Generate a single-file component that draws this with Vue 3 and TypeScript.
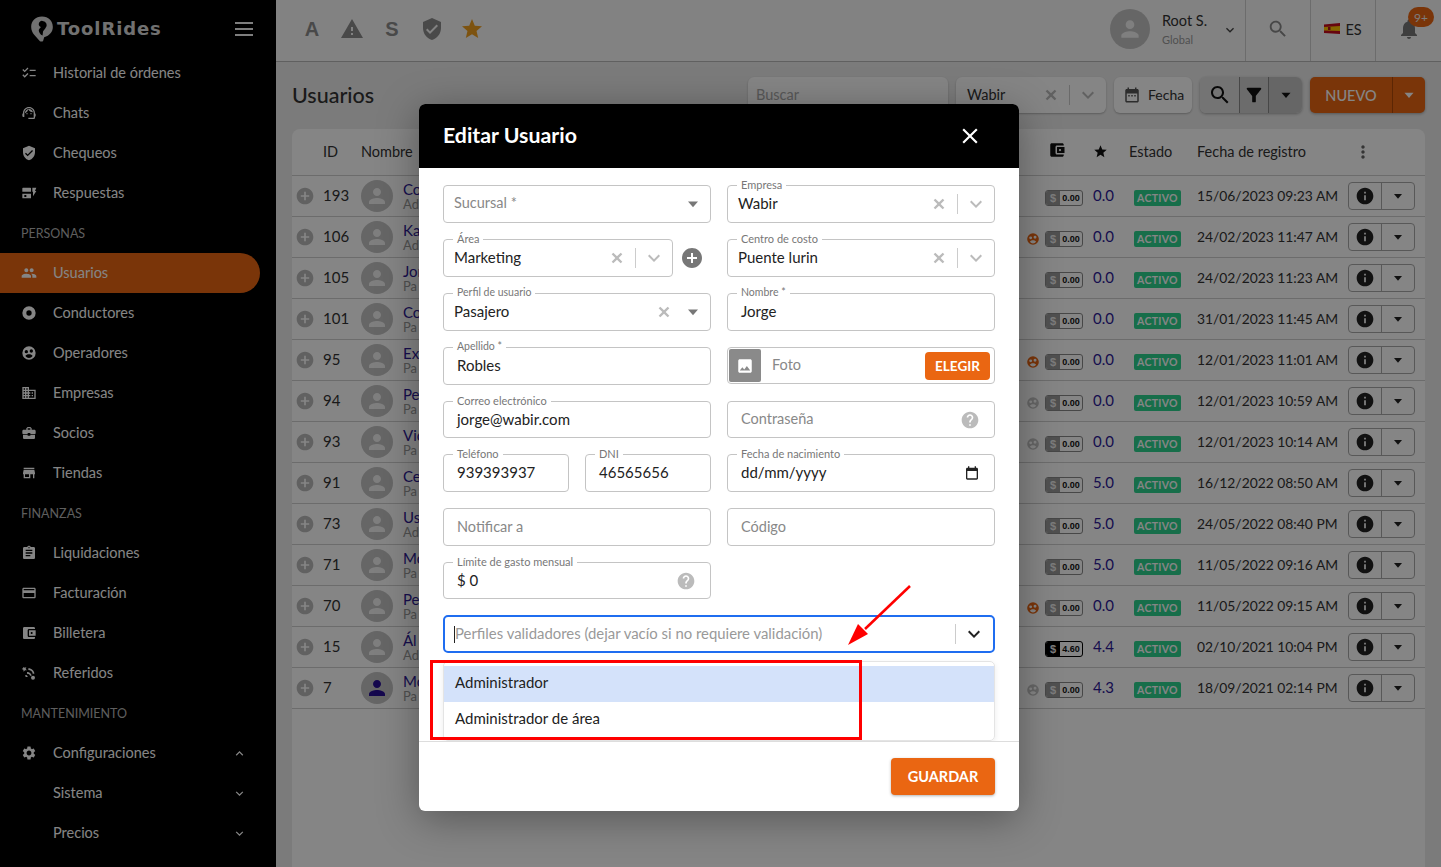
<script setup lang="ts">
import { h } from "vue";
import type { FunctionalComponent } from "vue";

/* material style icon paths */
const paths: Record<string, string> = {
    checklist: "M22 7h-9v2h9V7zm0 8h-9v2h9v-2zM5.54 11 2 7.46l1.41-1.41 2.12 2.12 4.24-4.24 1.41 1.41L5.54 11zm0 8L2 15.46l1.41-1.41 2.12 2.12 4.24-4.24 1.41 1.41L5.54 19z",
    agent: "M21 12.22C21 6.73 16.74 3 12 3c-4.69 0-9 3.65-9 9.28-.6.34-1 .98-1 1.72v2c0 1.1.9 2 2 2h1v-6.1c0-3.87 3.13-7 7-7s7 3.13 7 7V19h-8v2h8c1.1 0 2-.9 2-2v-1.22c.59-.31 1-.92 1-1.64v-2.3c0-.7-.41-1.31-1-1.62zM9 12a1 1 0 1 0 0 2 1 1 0 0 0 0-2zm6 0a1 1 0 1 0 0 2 1 1 0 0 0 0-2zM18 11.03C17.52 8.18 15.04 6 12.05 6c-3.03 0-6.29 2.51-6.03 6.45 2.47-1.01 4.33-3.21 4.86-5.89 1.31 2.63 4 4.44 7.12 4.47z",
    shield: "M12 1L3 5v6c0 5.55 3.84 10.74 9 12 5.16-1.26 9-6.45 9-12V5l-9-4zm-2 16l-4-4 1.41-1.41L10 14.17l6.59-6.59L18 9l-8 8z",
    form: "M3 4h11a1 1 0 0 1 1 1v5H2V5a1 1 0 0 1 1-1zm-1 9h13v7H3a1 1 0 0 1-1-1v-6zm3 2v3h3v-3H5zm12-11h6l-2 5h2l-5 8V10h-1V4z",
    people: "M16 11c1.66 0 2.99-1.34 2.99-3S17.66 5 16 5c-1.66 0-3 1.34-3 3s1.34 3 3 3zm-8 0c1.66 0 2.99-1.34 2.99-3S9.66 5 8 5C6.34 5 5 6.34 5 8s1.34 3 3 3zm0 2c-2.33 0-7 1.17-7 3.5V19h14v-2.5c0-2.33-4.67-3.5-7-3.5zm8 0c-.29 0-.62.02-.97.05 1.16.84 1.97 1.97 1.97 3.45V19h6v-2.5c0-2.33-4.67-3.5-7-3.5z",
    disc: "M12 2a10 10 0 1 0 0 20 10 10 0 0 0 0-20zm0 6a4 4 0 1 1 0 8 4 4 0 0 1 0-8z",
    face: "M12 2a10 10 0 1 0 0 20 10 10 0 0 0 0-20zM8 7.5a2.5 2.5 0 1 1 0 5 2.5 2.5 0 0 1 0-5zm7.5-1a2.5 2.5 0 1 1 0 5 2.5 2.5 0 0 1 0-5zM12 14c2.6 0 4.6 1 5.4 2.6A7 7 0 0 1 12 19.5a7 7 0 0 1-5.4-2.9C7.4 15 9.4 14 12 14z",
    domain: "M12 7V3H2v18h20V7H12zM6 19H4v-2h2v2zm0-4H4v-2h2v2zm0-4H4V9h2v2zm0-4H4V5h2v2zm4 12H8v-2h2v2zm0-4H8v-2h2v2zm0-4H8V9h2v2zm0-4H8V5h2v2zm10 12h-8v-2h2v-2h-2v-2h2v-2h-2V9h8v10zm-2-8h-2v2h2v-2zm0 4h-2v2h2v-2z",
    work: "M10 16v-1H3.01L3 19c0 1.11.89 2 2 2h14c1.11 0 2-.89 2-2v-4h-7v1h-4zm10-9h-4.01V5l-2-2h-4l-2 2v2H4c-1.1 0-2 .9-2 2v3c0 1.11.89 2 2 2h6v-2h4v2h6c1.1 0 2-.9 2-2V9c0-1.1-.9-2-2-2zm-6 0h-4V5h4v2z",
    store: "M20 4H4v2h16V4zm1 10v-2l-1-5H4l-1 5v2h1v6h10v-6h4v6h2v-6h1zm-9 4H6v-4h6v4z",
    assignment: "M19 3h-4.18C14.4 1.84 13.3 1 12 1c-1.3 0-2.4.84-2.82 2H5c-1.1 0-2 .9-2 2v14c0 1.1.9 2 2 2h14c1.1 0 2-.9 2-2V5c0-1.1-.9-2-2-2zm-7 0c.55 0 1 .45 1 1s-.45 1-1 1-1-.45-1-1 .45-1 1-1zm2 14H7v-2h7v2zm3-4H7v-2h10v2zm0-4H7V7h10v2z",
    card: "M20 4H4c-1.11 0-1.99.89-1.99 2L2 18c0 1.11.89 2 2 2h16c1.11 0 2-.89 2-2V6c0-1.11-.89-2-2-2zm0 14H4v-6h16v6zm0-10H4V6h16v2z",
    wallet: "M21 18v1c0 1.1-.9 2-2 2H5c-1.11 0-2-.9-2-2V5c0-1.1.89-2 2-2h14c1.1 0 2 .9 2 2v1h-9c-1.11 0-2 .9-2 2v8c0 1.1.89 2 2 2h9zm-9-2h10V8H12v8zm4-2.5c-.83 0-1.5-.67-1.5-1.5s.67-1.5 1.5-1.5 1.5.67 1.5 1.5-.67 1.5-1.5 1.5z",
    referral: "M3 3l3 1 2-1-1 3 2 2-3 0-2 2-.5-3-2.500-1 2.500-1.500zM11 5c5 0 9 4 9 8h-2.500c0-3-3-5.500-6.500-5.500zM9 10.500c4 0 7 3 7 5.500h-2.500c0-2-2-3-4.500-3zM6.500 15c2 0 3.500 1 3.500 3h-2.500c0-.5-.5-.8-1-.8zM18 16a3 3 0 1 1 0 6 3 3 0 0 1 0-6z",
    settings: "M19.14 12.94c.04-.3.06-.61.06-.94 0-.32-.02-.64-.07-.94l2.03-1.58a.49.49 0 0 0 .12-.61l-1.92-3.32a.488.488 0 0 0-.59-.22l-2.39.96c-.5-.38-1.03-.7-1.62-.94l-.36-2.54a.484.484 0 0 0-.48-.41h-3.84c-.24 0-.43.17-.47.41l-.36 2.54c-.59.24-1.13.57-1.62.94l-2.39-.96c-.22-.08-.47 0-.59.22L2.74 8.87c-.12.21-.08.47.12.61l2.03 1.58c-.05.3-.09.63-.09.94s.02.64.07.94l-2.03 1.58a.49.49 0 0 0-.12.61l1.92 3.32c.12.22.37.29.59.22l2.39-.96c.5.38 1.03.7 1.62.94l.36 2.54c.05.24.24.41.48.41h3.84c.24 0 .44-.17.47-.41l.36-2.54c.59-.24 1.13-.56 1.62-.94l2.39.96c.22.08.47 0 .59-.22l1.92-3.32c.12-.22.07-.47-.12-.61l-2.01-1.58zM12 15.6c-1.98 0-3.6-1.62-3.6-3.6s1.62-3.6 3.6-3.6 3.6 1.62 3.6 3.6-1.62 3.6-3.6 3.6z",
    person: "M12 12c2.21 0 4-1.79 4-4s-1.79-4-4-4-4 1.79-4 4 1.79 4 4 4zm0 2c-2.67 0-8 1.34-8 4v2h16v-2c0-2.66-5.33-4-8-4z",
    star: "M12 17.27 18.18 21l-1.64-7.03L22 9.24l-7.19-.61L12 2 9.19 8.63 2 9.24l5.46 4.73L5.82 21z",
    warning: "M1 21h22L12 2 1 21zm12-3h-2v-2h2v2zm0-4h-2v-4h2v4z",
    search: "M15.5 14h-.79l-.28-.27C15.41 12.59 16 11.11 16 9.5 16 5.91 13.09 3 9.5 3S3 5.91 3 9.5 5.91 16 9.5 16c1.61 0 3.09-.59 4.23-1.57l.27.28v.79l5 4.99L20.49 19l-4.99-5zm-6 0C7.01 14 5 11.99 5 9.5S7.01 5 9.5 5 14 7.01 14 9.5 11.99 14 9.5 14z",
    filter: "M4.25 5.61C6.27 8.2 10 13 10 13v6c0 .55.45 1 1 1h2c.55 0 1-.45 1-1v-6s3.72-4.8 5.74-7.39c.51-.66.04-1.61-.79-1.61H5.04c-.83 0-1.3.95-.79 1.61z",
    bell: "M12 22c1.1 0 2-.9 2-2h-4c0 1.1.9 2 2 2zm6-6v-5c0-3.07-1.63-5.64-4.5-6.32V4c0-.83-.67-1.5-1.5-1.5s-1.5.67-1.5 1.5v.68C7.64 5.36 6 7.92 6 11v5l-2 2v1h16v-1l-2-2z",
    calendar: "M19 4h-1V2h-2v2H8V2H6v2H5c-1.1 0-2 .9-2 2v14c0 1.1.9 2 2 2h14c1.1 0 2-.9 2-2V6c0-1.1-.9-2-2-2zm0 16H5V10h14v10zM9 14H7v-2h2v2zm4 0h-2v-2h2v2zm4 0h-2v-2h2v2z",
    datepick: "M19 4h-1V2h-2v2H8V2H6v2H5c-1.1 0-2 .9-2 2v14c0 1.1.9 2 2 2h14c1.1 0 2-.9 2-2V6c0-1.1-.9-2-2-2zm0 16H5V9h14v11z",
    info: "M12 2C6.48 2 2 6.48 2 12s4.48 10 10 10 10-4.48 10-10S17.52 2 12 2zm1 15h-2v-6h2v6zm0-8h-2V7h2v2z",
    help: "M12 2C6.48 2 2 6.48 2 12s4.48 10 10 10 10-4.48 10-10S17.52 2 12 2zm1 17h-2v-2h2v2zm2.07-7.75l-.9.92C13.45 12.9 13 13.5 13 15h-2v-.5c0-1.1.45-2.1 1.17-2.83l1.24-1.26c.37-.36.59-.86.59-1.41 0-1.1-.9-2-2-2s-2 .9-2 2H8c0-2.21 1.79-4 4-4s4 1.79 4 4c0 .88-.36 1.68-.93 2.25z",
    add: "M12 2C6.48 2 2 6.48 2 12s4.48 10 10 10 10-4.48 10-10S17.52 2 12 2zm5 11h-4v4h-2v-4H7v-2h4V7h2v4h4v2z",
    image: "M21 19V5c0-1.1-.9-2-2-2H5c-1.1 0-2 .9-2 2v14c0 1.1.9 2 2 2h14c1.1 0 2-.9 2-2zM8.5 13.5l2.5 3.01L14.5 12l4.5 6H5l3.5-4.5z",
    more: "M12 8c1.1 0 2-.9 2-2s-.9-2-2-2-2 .9-2 2 .9 2 2 2zm0 2c-1.1 0-2 .9-2 2s.9 2 2 2 2-.9 2-2-.9-2-2-2zm0 6c-1.1 0-2 .9-2 2s.9 2 2 2 2-.9 2-2-.9-2-2-2z",
    close: "M19 6.41 17.59 5 12 10.59 6.41 5 5 6.41 10.59 12 5 17.59 6.41 19 12 13.41 17.59 19 19 17.59 13.41 12z",
    xBold: "M20 6.500 17.500 4 12 9.500 6.500 4 4 6.500 9.500 12 4 17.500 6.500 20 12 14.500 17.500 20 20 17.500 14.500 12z",
    caret: "M6 9h12l-6 7z",
    chevron: "M7.4 8.6 12 13.2l4.6-4.6L18 10l-6 6-6-6z",
    chevronUp: "M7.4 15.4 12 10.8l4.6 4.6L18 14l-6-6-6 6z",
    pin: "M12 1C6 1 2 5.4 2 10.5c0 6 5 9 7.5 12.5.8 1 1.5 1 2.500 1 .6 0 1-.3 1.300-1.500L14 20c5-1.500 8-5 8-9.500C22 5.400 18 1 12 1zm.5 4a4 4 0 0 1 2.500 7l-2 2.500-.5 4c-2-1-3.500-3-3.500-5 0-1 1.500-2 2-3-1.500-.5-2-1.500-2-2.500a3 3 0 0 1 3.500-3z",
};

const Ic: FunctionalComponent<{ name: string }> = (props) =>
    h("svg", { viewBox: "0 0 24 24", fill: "currentColor", "fill-rule": "evenodd" }, [h("path", { d: paths[props.name] })]);
Ic.props = ["name"];

type NavItem = { label?: string; icon?: string; section?: string; active?: boolean; arrow?: "up" | "down" };

const navItems: NavItem[] = [
    { label: "Historial de órdenes", icon: "checklist" },
    { label: "Chats", icon: "agent" },
    { label: "Chequeos", icon: "shield" },
    { label: "Respuestas", icon: "form" },
    { section: "PERSONAS" },
    { label: "Usuarios", icon: "people", active: true },
    { label: "Conductores", icon: "disc" },
    { label: "Operadores", icon: "face" },
    { label: "Empresas", icon: "domain" },
    { label: "Socios", icon: "work" },
    { label: "Tiendas", icon: "store" },
    { section: "FINANZAS" },
    { label: "Liquidaciones", icon: "assignment" },
    { label: "Facturación", icon: "card" },
    { label: "Billetera", icon: "wallet" },
    { label: "Referidos", icon: "referral" },
    { section: "MANTENIMIENTO" },
    { label: "Configuraciones", icon: "settings", arrow: "up" },
    { label: "Sistema", arrow: "down" },
    { label: "Precios", arrow: "down" },
];

type Row = { id: number; name: string; role: string; face?: "on" | "off"; bal: string; rate: string; date: string };

const rows: Row[] = [
    { id: 193, name: "Co", role: "Ad", bal: "0.00", rate: "0.0", date: "15/06/2023 09:23 AM" },
    { id: 106, name: "Ka", role: "Ad", face: "on", bal: "0.00", rate: "0.0", date: "24/02/2023 11:47 AM" },
    { id: 105, name: "Jor", role: "Pa", bal: "0.00", rate: "0.0", date: "24/02/2023 11:23 AM" },
    { id: 101, name: "Co", role: "Pa", bal: "0.00", rate: "0.0", date: "31/01/2023 11:45 AM" },
    { id: 95, name: "Ex", role: "Pa", face: "on", bal: "0.00", rate: "0.0", date: "12/01/2023 11:01 AM" },
    { id: 94, name: "Pe", role: "Pa", face: "off", bal: "0.00", rate: "0.0", date: "12/01/2023 10:59 AM" },
    { id: 93, name: "Vic", role: "Pa", face: "off", bal: "0.00", rate: "0.0", date: "12/01/2023 10:14 AM" },
    { id: 91, name: "Ce", role: "Pa", bal: "0.00", rate: "5.0", date: "16/12/2022 08:50 AM" },
    { id: 73, name: "Us", role: "Ad", bal: "0.00", rate: "5.0", date: "24/05/2022 08:40 PM" },
    { id: 71, name: "Mo", role: "Pa", bal: "0.00", rate: "5.0", date: "11/05/2022 09:16 AM" },
    { id: 70, name: "Pe", role: "Pa", face: "on", bal: "0.00", rate: "0.0", date: "11/05/2022 09:15 AM" },
    { id: 15, name: "Ál", role: "Ad", bal: "4.60", rate: "4.4", date: "02/10/2021 10:04 PM" },
    { id: 7, name: "Mo", role: "Pa", face: "off", bal: "0.00", rate: "4.3", date: "18/09/2021 02:14 PM" },
];
</script>

<template>
    <div class="app">
        <!-- SIDEBAR -->
        <aside class="sidebar">
            <div class="logo-row">
                <div class="logo">
                    <Ic name="pin" class="logo-pin" />
                    <span class="logo-text">ToolRides</span>
                </div>
                <div class="burger"><i></i><i></i><i></i></div>
            </div>
            <nav>
                <template v-for="item in navItems" :key="item.label || item.section">
                    <div v-if="item.section" class="nav-section">{{ item.section }}</div>
                    <div v-else class="nav-item" :class="{ active: item.active }">
                        <span class="nav-icon"><Ic v-if="item.icon" :name="item.icon" /></span>
                        <span class="nav-label">{{ item.label }}</span>
                        <Ic v-if="item.arrow" :name="item.arrow === 'up' ? 'chevronUp' : 'chevron'" class="nav-arrow" />
                    </div>
                </template>
            </nav>
        </aside>

        <main class="main">
            <!-- TOP BAR -->
            <header class="topbar">
                <div class="quick">
                    <span class="quick-item letter">A</span>
                    <span class="quick-item"><Ic name="warning" /></span>
                    <span class="quick-item letter">S</span>
                    <span class="quick-item"><Ic name="shield" /></span>
                    <span class="quick-item gold"><Ic name="star" /></span>
                </div>
                <div class="user">
                    <span class="user-avatar"><Ic name="person" /></span>
                    <div class="user-text">
                        <div class="user-name">Root S.</div>
                        <div class="user-scope">Global</div>
                    </div>
                    <Ic name="chevron" class="user-chevron" />
                </div>
                <div class="top-cell search-cell"><Ic name="search" /></div>
                <div class="top-cell lang-cell">
                    <svg class="flag" viewBox="0 0 16 11">
                        <path d="M0 1.500 16 0v11L0 10z" fill="#c60b1e" />
                        <path d="M0 4 16 3v5L0 7.500z" fill="#ffc400" />
                        <rect x="4" y="4" width="2.500" height="3" fill="#ad1519" />
                    </svg>
                    <span>ES</span>
                </div>
                <div class="top-cell bell-cell">
                    <Ic name="bell" />
                    <span class="bell-badge">9+</span>
                </div>
            </header>

            <!-- TITLE AND ACTIONS -->
            <section class="toolbar">
                <h1>Usuarios</h1>
                <div class="tool-search"><span>Buscar</span></div>
                <div class="tool-select">
                    <span class="tool-select-value">Wabir</span>
                    <Ic name="xBold" class="sel-x" />
                    <i class="sel-sep"></i>
                    <Ic name="chevron" class="sel-chev" />
                </div>
                <div class="tool-date"><Ic name="calendar" /><span>Fecha</span></div>
                <div class="tool-group">
                    <span class="seg seg-search"><Ic name="search" /></span>
                    <span class="seg seg-filter"><Ic name="filter" /></span>
                    <span class="seg seg-caret"><Ic name="caret" /></span>
                </div>
                <div class="tool-new">
                    <span class="new-label">NUEVO</span>
                    <span class="new-caret"><Ic name="caret" /></span>
                </div>
            </section>

            <!-- TABLE -->
            <section class="table-card">
                <div class="grid-row head">
                    <span></span>
                    <span class="head-id">ID</span>
                    <span class="head-name">Nombre</span>
                    <span class="head-wallet"><Ic name="wallet" /></span>
                    <span class="head-star"><Ic name="star" /></span>
                    <span class="head-state">Estado</span>
                    <span class="head-date">Fecha de registro</span>
                    <span class="head-more"><Ic name="more" /></span>
                </div>
                <div v-for="row in rows" :key="row.id" class="grid-row body-row">
                    <span class="plus"><Ic name="add" /></span>
                    <span class="cell-id">{{ row.id }}</span>
                    <span class="avatar" :class="{ navy: row.id === 7 }"><Ic name="person" /></span>
                    <div class="cell-name">
                        <div class="name-main">{{ row.name }}</div>
                        <div class="name-sub">{{ row.role }}</div>
                    </div>
                    <span class="face" :class="row.face">
                        <Ic v-if="row.face" name="face" />
                    </span>
                    <span class="balance" :class="{ funded: row.bal !== '0.00' }">
                        <b>$</b><em>{{ row.bal }}</em>
                    </span>
                    <span class="rate">{{ row.rate }}</span>
                    <span class="state"><b>ACTIVO</b></span>
                    <span class="cell-date">{{ row.date }}</span>
                    <span class="row-actions">
                        <span class="act-info"><Ic name="info" /></span>
                        <span class="act-caret"><Ic name="caret" /></span>
                    </span>
                </div>
            </section>
        </main>

        <!-- BACKDROP -->
        <div class="backdrop"></div>

        <!-- MODAL -->
        <div class="modal">
            <div class="modal-head">
                <h2>Editar Usuario</h2>
                <Ic name="close" class="modal-close" />
            </div>
            <div class="modal-body">
                <div class="form-grid">
                    <div class="field select"><span class="ph high">Sucursal *</span><Ic name="caret" class="f-caret" /></div>
                    <div class="field select">
                        <label>Empresa</label><span class="val">Wabir</span>
                        <Ic name="xBold" class="f-x" /><i class="f-sep"></i><Ic name="chevron" class="f-chev" />
                    </div>

                    <div class="with-add">
                        <div class="field select">
                            <label>Área</label><span class="val">Marketing</span>
                            <Ic name="xBold" class="f-x" /><i class="f-sep"></i><Ic name="chevron" class="f-chev" />
                        </div>
                        <Ic name="add" class="add-btn" />
                    </div>
                    <div class="field select">
                        <label>Centro de costo</label><span class="val">Puente lurin</span>
                        <Ic name="xBold" class="f-x" /><i class="f-sep"></i><Ic name="chevron" class="f-chev" />
                    </div>

                    <div class="field select">
                        <label class="small">Perfil de usuario</label><span class="val">Pasajero</span>
                        <Ic name="xBold" class="f-x near" /><Ic name="caret" class="f-caret" />
                    </div>
                    <div class="field"><label class="small">Nombre *</label><span class="val">Jorge</span></div>

                    <div class="field"><label class="small">Apellido *</label><span class="val">Robles</span></div>
                    <div class="field photo">
                        <span class="photo-thumb"><Ic name="image" /></span>
                        <span class="ph">Foto</span>
                        <span class="photo-btn">ELEGIR</span>
                    </div>

                    <div class="field"><label>Correo electrónico</label><span class="val">jorge@wabir.com</span></div>
                    <div class="field"><span class="ph">Contraseña</span><Ic name="help" class="f-help" /></div>

                    <div class="pair">
                        <div class="field"><label>Teléfono</label><span class="val">939393937</span></div>
                        <div class="field"><label>DNI</label><span class="val">46565656</span></div>
                    </div>
                    <div class="field">
                        <label>Fecha de nacimiento</label><span class="val">dd/mm/yyyy</span>
                        <Ic name="datepick" class="f-date" />
                    </div>

                    <div class="field"><span class="ph">Notificar a</span></div>
                    <div class="field"><span class="ph">Código</span></div>

                    <div class="field"><label>Límite de gasto mensual</label><span class="val">$ 0</span><Ic name="help" class="f-help" /></div>
                    <div></div>

                    <div class="field focused">
                        <i class="cursor"></i>
                        <span class="ph wide">Perfiles validadores (dejar vacío si no requiere validación)</span>
                        <i class="f-sep"></i><Ic name="chevron" class="f-chev dark" />
                    </div>
                </div>
                <div class="menu">
                    <div class="option hover"><span>Administrador</span></div>
                    <div class="option"><span>Administrador de área</span></div>
                </div>
            </div>
            <div class="modal-foot">
                <span class="save">GUARDAR</span>
            </div>

            <!-- ANNOTATIONS DRAWN ON THE SCREENSHOT -->
            <div class="mark-box"></div>
            <svg class="mark-arrow" viewBox="0 0 70 66">
                <path d="M67 2 22 45" stroke="#f00" stroke-width="2.500" fill="none" />
                <path d="M5 61 15 40 25 50z" fill="#f00" />
            </svg>
        </div>
    </div>
</template>

<style>
html,
body {
    margin: 0;
    background: #000;
}
</style>

<style scoped>
.app {
    display: flex;
    width: 1441px;
    height: 867px;
    overflow: hidden;
    position: relative;
    font-family: Lato, "Noto Sans", sans-serif;
    font-size: 14.5px;
    color: #333;
}

svg {
    display: block;
}

/* ---------- sidebar ---------- */
.sidebar {
    width: 276px;
    flex: none;
    background: #000;
    color: #fff;
}

.logo-row {
    height: 53px;
    display: flex;
    align-items: center;
    justify-content: space-between;
    padding: 4px 23px 0 29px;
    box-sizing: border-box;
}

.logo {
    display: flex;
    align-items: center;
    gap: 2px;
    color: #d8d8d8;
}

.logo-pin {
    width: 26px;
    height: 31px;
}

.logo-text {
    font-family: "DejaVu Sans", sans-serif;
    font-weight: 700;
    font-size: 18px;
    letter-spacing: .9px;
}

.burger {
    display: flex;
    flex-direction: column;
    gap: 4px;
}

.burger i {
    display: block;
    width: 18px;
    height: 2px;
    background: #f2f2f2;
}

.nav-section {
    height: 40px;
    display: flex;
    align-items: center;
    padding-left: 21px;
    font-size: 12.5px;
    color: #b5b5b5;
}

.nav-item {
    height: 40px;
    width: 260px;
    display: flex;
    align-items: center;
    padding-left: 20px;
    box-sizing: border-box;
    border-radius: 0 20px 20px 0;
}

.nav-item.active {
    background: #ea6612;
}

.nav-icon {
    width: 18px;
    height: 18px;
    margin-right: 15px;
}

.nav-icon svg {
    width: 16px;
    height: 16px;
    margin: 1px;
}

.nav-label {
    flex: 1;
    margin-top: -2px;
}

.nav-arrow {
    width: 15px;
    height: 15px;
    margin-right: 13px;
}

/* ---------- top bar ---------- */
.main {
    flex: 1;
    min-width: 0;
    background: #ececec;
}

.topbar {
    height: 62px;
    box-sizing: border-box;
    border-bottom: 1px solid #b8b8b8;
    background: #f9f9f9;
    display: flex;
    align-items: stretch;
    padding-left: 16px;
}

.quick {
    display: flex;
    align-items: center;
    flex: 1;
    margin-top: -3px;
}

.quick-item {
    width: 40px;
    height: 24px;
    display: flex;
    align-items: center;
    justify-content: center;
    color: #8c8c8c;
}

.quick-item svg {
    width: 24px;
    height: 24px;
}

.letter {
    font-family: "Liberation Sans", sans-serif;
    font-weight: 700;
    font-size: 20px;
}

.gold {
    color: #f0a020;
}

.user {
    display: flex;
    align-items: center;
    width: 135px;
    flex: none;
    border-right: 1px solid #cfcfcf;
}

.user-avatar {
    width: 40px;
    height: 40px;
    flex: none;
    border-radius: 50%;
    background: #c4c4c4;
    color: #f3f3f3;
    display: flex;
    align-items: center;
    justify-content: center;
    margin-right: 12px;
    margin-top: -4px;
}

.user-avatar svg {
    width: 26px;
    height: 26px;
}

.user-text {
    flex: 1;
    margin-top: -4px;
}

.user-name {
    font-size: 14.5px;
    line-height: 19px;
}

.user-scope {
    font-size: 11px;
    line-height: 15px;
    color: #999;
    margin-top: 2px;
}

.user-chevron {
    width: 16px;
    height: 16px;
    margin: -2px 7px 0 0;
    color: #444;
}

.top-cell {
    width: 65px;
    flex: none;
    box-sizing: border-box;
    padding-bottom: 3px;
    border-right: 1px solid #cfcfcf;
    display: flex;
    align-items: center;
    justify-content: center;
    position: relative;
}

.search-cell svg {
    width: 22px;
    height: 22px;
    color: #888;
}

.lang-cell {
    gap: 5px;
}

.flag {
    width: 16px;
    height: 11px;
    margin-top: -2px;
}

.bell-cell {
    border-right: none;
    justify-content: flex-start;
    padding-left: 21px;
    color: #777;
}

.bell-cell > svg {
    width: 24px;
    height: 24px;
}

.bell-badge {
    position: absolute;
    left: 32px;
    top: 7px;
    width: 26px;
    height: 20px;
    border-radius: 10px;
    background: #ea6612;
    color: #eee;
    font-size: 12px;
    display: flex;
    align-items: center;
    justify-content: center;
}

/* ---------- toolbar ---------- */
.toolbar {
    display: flex;
    align-items: center;
    gap: 8px;
    height: 36px;
    padding: 15px 16px 0;
}

.toolbar h1 {
    flex: 1;
    margin: 0;
    font-size: 21.5px;
    font-weight: 500;
    color: #333;
}

.tool-search,
.tool-select,
.tool-date {
    height: 36px;
    box-sizing: border-box;
    background: #fff;
    border-radius: 6px;
    box-shadow: 0 1px 2px rgba(0, 0, 0, .25);
    display: flex;
    align-items: center;
}

.tool-search {
    width: 200px;
    padding-left: 8px;
    color: #aaa;
}

.tool-search span,
.tool-select-value,
.tool-date span {
    margin-top: -2px;
}

.tool-select {
    width: 150px;
    padding-left: 11px;
}

.tool-select-value {
    flex: 1;
}

.sel-x {
    width: 16px;
    height: 16px;
    color: #bbb;
    margin-right: 10px;
}

.sel-sep {
    width: 1px;
    height: 20px;
    background: #ccc;
    margin-right: 6px;
}

.sel-chev {
    width: 24px;
    height: 24px;
    margin-right: 6px;
    color: #bbb;
}

.tool-date {
    width: 78px;
    padding-left: 9px;
    gap: 7px;
    font-size: 14px;
}

.tool-date svg {
    width: 18px;
    height: 18px;
    color: #555;
}

.tool-group {
    display: flex;
    width: 102px;
    height: 36px;
    border-radius: 6px;
    overflow: hidden;
    box-shadow: 0 1px 3px rgba(0, 0, 0, .3);
}

.seg {
    display: flex;
    align-items: center;
    justify-content: center;
    color: #111;
}

.seg-search {
    width: 40px;
    background: #dedede;
    border-right: 1px solid #888;
    box-sizing: border-box;
}

.seg-search svg {
    width: 24px;
    height: 24px;
}

.seg-filter {
    width: 29px;
    background: #cfcfcf;
    border-right: 1px solid #888;
    box-sizing: border-box;
}

.seg-filter svg {
    width: 22px;
    height: 22px;
}

.seg-caret {
    flex: 1;
    background: #c4c4c4;
}

.seg-caret svg {
    width: 18px;
    height: 18px;
}

.tool-new {
    display: flex;
    width: 115px;
    height: 36px;
    background: #ea6612;
    border-radius: 5px;
    color: #fff;
    box-shadow: 0 1px 3px rgba(0, 0, 0, .3);
}

.new-label {
    width: 83px;
    display: flex;
    align-items: center;
    justify-content: center;
    border-right: 1px solid #b04a08;
    box-sizing: border-box;
    font-size: 14.5px;
    font-weight: 500;
}

.new-caret {
    flex: 1;
    display: flex;
    align-items: center;
    justify-content: center;
}

.new-caret svg {
    width: 18px;
    height: 18px;
}

/* ---------- table ---------- */
.table-card {
    margin: 16px 16px 0;
    background: #fff;
    border-radius: 8px 8px 0 0;
    height: 738px;
}

.grid-row {
    display: grid;
    grid-template-columns: 31px 38px 42px 1fr 19px 48px 41px 63px 151px 77px;
    align-items: center;
    border-bottom: 1px solid #cfcfcf;
    box-sizing: border-box;
}

.head {
    height: 47px;
    grid-template-columns: 31px 38px 1fr 47px 36px 68px 151px 77px;
    font-size: 14.5px;
    color: #333;
}

.head-id,
.head-name,
.head-state,
.head-date {
    margin-top: -1px;
    white-space: nowrap;
}

.head-wallet svg {
    width: 18px;
    height: 18px;
    margin: -5px 0 0 2px;
    color: #111;
}

.head-star svg {
    width: 15px;
    height: 15px;
    color: #111;
    margin-top: -2px;
}

.head-more svg {
    width: 20px;
    height: 20px;
    margin-left: 5px;
    color: #666;
}

.body-row {
    height: 41px;
}

.plus {
    padding-left: 5px;
    color: #bbb;
}

.plus svg {
    width: 20px;
    height: 20px;
    margin-left: -2px;
}

.cell-id {
    font-size: 15px;
    margin-top: -2px;
}

.avatar {
    width: 32px;
    height: 32px;
    border-radius: 50%;
    background: #c4c4c4;
    color: #f3f3f3;
    display: flex;
    align-items: center;
    justify-content: center;
}

.avatar svg {
    width: 24px;
    height: 24px;
}

.avatar.navy {
    color: #2a1096;
}

.name-main {
    color: #2d1a96;
    font-size: 15px;
    line-height: 16px;
}

.name-sub {
    color: #999;
    font-size: 13px;
    line-height: 15px;
}

.face svg {
    width: 14px;
    height: 14px;
    margin-top: 3px;
}

.face.on {
    color: #ea6612;
}

.face.off {
    color: #c4c4c4;
}

.balance {
    display: flex;
    width: 38px;
    height: 16px;
    box-sizing: border-box;
    border: 1px solid #888;
    border-radius: 3px;
    overflow: hidden;
    margin-top: 3px;
    font-family: "Liberation Sans", sans-serif;
}

.balance b {
    width: 14px;
    background: #999;
    color: #eee;
    font-size: 11px;
    text-align: center;
    line-height: 14px;
}

.balance em {
    flex: 1;
    font-style: normal;
    font-weight: 700;
    font-size: 9px;
    text-align: center;
    line-height: 14px;
    color: #111;
}

.balance.funded {
    border-color: #000;
}

.balance.funded b {
    background: #000;
}

.rate {
    color: #2d1a96;
    font-size: 15px;
    margin-top: -2px;
}

.state b {
    display: block;
    width: 47px;
    height: 16px;
    border-radius: 2px;
    background: #2cd48f;
    color: #fff;
    font-size: 10.5px;
    font-weight: 700;
    letter-spacing: .3px;
    text-align: center;
    line-height: 16px;
    margin-top: 3px;
}

.cell-date {
    font-size: 13.85px;
    white-space: nowrap;
    margin-top: -2px;
}

.row-actions {
    display: flex;
    width: 67px;
    height: 28px;
    box-sizing: border-box;
    border: 1px solid #aaa;
    border-radius: 4px;
}

.act-info {
    width: 33px;
    border-right: 1px solid #aaa;
    box-sizing: border-box;
    display: flex;
    align-items: center;
    justify-content: center;
    color: #222;
}

.act-info svg {
    width: 20px;
    height: 20px;
}

.act-caret {
    flex: 1;
    display: flex;
    align-items: center;
    justify-content: center;
    color: #222;
}

.act-caret svg {
    width: 16px;
    height: 16px;
}

/* ---------- modal ---------- */
.backdrop {
    position: absolute;
    inset: 0;
    background: rgba(0, 0, 0, .48);
}

.modal {
    position: absolute;
    left: 419px;
    top: 104px;
    width: 600px;
    height: 707px;
    background: #fff;
    border-radius: 6px;
    box-shadow: 0 8px 40px rgba(0, 0, 0, .35);
    display: flex;
    flex-direction: column;
}

.modal-head {
    height: 64px;
    flex: none;
    background: #000;
    color: #fff;
    border-radius: 6px 6px 0 0;
    display: flex;
    align-items: center;
    justify-content: space-between;
    padding: 0 36px 0 24px;
}

.modal-head h2 {
    margin: -2px 0 0;
    font-size: 21.3px;
    font-weight: 700;
}

.modal-close {
    width: 26px;
    height: 26px;
}

.modal-body {
    height: 573px;
    box-sizing: border-box;
    padding: 17px 24px 0;
    overflow: hidden;
    flex: none;
}

.form-grid {
    display: grid;
    grid-template-columns: 268px 268px;
    grid-template-rows: 38px 38px 38px 38px 37px 38px 38px 37px 38px;
    column-gap: 16px;
    row-gap: 16px;
}

.field {
    position: relative;
    display: flex;
    align-items: center;
    border: 1px solid #c4c4c4;
    border-radius: 4px;
    padding: 0 13px;
    box-sizing: border-box;
    color: #222;
    min-width: 0;
}

.field.select {
    padding: 0 10px;
}

.field label {
    position: absolute;
    left: 9px;
    top: -8px;
    padding: 0 4px;
    background: #fff;
    font-size: 11px;
    line-height: 13px;
    color: #777;
}

.field label.small {
    font-size: 10.5px;
    top: -8px;
}

.val {
    flex: 1;
    font-size: 15px;
    white-space: nowrap;
    margin-top: -2px;
}

.ph {
    flex: 1;
    font-size: 14.5px;
    color: #888;
    white-space: nowrap;
    margin-top: -2px;
}

.ph.high {
    margin-top: -4px;
}

.ph.wide {
    font-size: 14.9px;
    color: #999;
}

.f-caret {
    width: 20px;
    height: 20px;
    color: #777;
    margin-right: -3px;
}

.f-x {
    width: 16px;
    height: 16px;
    color: #bbb;
    margin-right: 10px;
}

.f-x.near {
    margin-right: 11px;
}

.f-sep {
    width: 1px;
    height: 20px;
    background: #ccc;
    margin-right: 6px;
}

.f-chev {
    width: 24px;
    height: 24px;
    color: #bbb;
    margin-right: -4px;
}

.f-chev.dark {
    color: #222;
}

.with-add {
    display: flex;
    align-items: center;
    gap: 7px;
    min-width: 0;
}

.with-add .field {
    flex: 1;
    height: 100%;
}

.add-btn {
    width: 24px;
    height: 24px;
    color: #777;
    margin-right: 7px;
}

.photo {
    padding: 0 4px 0 1px;
    height: 37px;
}

.photo-thumb {
    width: 32px;
    height: 33px;
    background: #8a8a8a;
    color: #fff;
    border-radius: 2px;
    display: flex;
    align-items: center;
    justify-content: center;
    margin-right: 11px;
}

.photo-thumb svg {
    width: 18px;
    height: 18px;
}

.photo-btn {
    width: 65px;
    height: 28px;
    background: #ea6612;
    color: #fff;
    border-radius: 4px;
    font-size: 13.5px;
    font-weight: 700;
    display: flex;
    align-items: center;
    justify-content: center;
}

.f-help {
    width: 20px;
    height: 20px;
    color: #bbb;
    margin-right: 1px;
}

.f-date {
    width: 16px;
    height: 16px;
    color: #222;
    margin-right: 1px;
}

.pair {
    display: grid;
    grid-template-columns: 126px 126px;
    column-gap: 16px;
}

.focused {
    grid-column: 1 / span 2;
    border: 2px solid #1f6df0;
    padding: 0 11px 0 9px;
    border-radius: 5px;
}

.cursor {
    width: 1px;
    height: 17px;
    background: #222;
    flex: none;
}

.menu {
    margin-top: 8px;
    height: 80px;
    box-sizing: border-box;
    border: 1px solid #e4e4e4;
    border-radius: 5px;
    padding: 4px 0;
    box-shadow: 0 2px 6px rgba(0, 0, 0, .08);
}

.option {
    height: 36px;
    padding-left: 11px;
    display: flex;
    align-items: center;
    font-size: 15px;
    color: #222;
}

.option span {
    margin-top: -5px;
}

.option.hover {
    background: #d4e2fa;
}

.modal-foot {
    flex: 1;
    border-top: 1px solid #ddd;
    display: flex;
    align-items: flex-start;
    justify-content: flex-end;
    padding: 16px 24px 0;
}

.save {
    width: 104px;
    height: 37px;
    background: #ea6612;
    color: #fff;
    border-radius: 4px;
    box-shadow: 0 1px 3px rgba(0, 0, 0, .3);
    font-size: 14.5px;
    font-weight: 700;
    display: flex;
    align-items: center;
    justify-content: center;
}

.mark-box {
    position: absolute;
    left: 11px;
    top: 556px;
    width: 432px;
    height: 80px;
    box-sizing: border-box;
    border: 3px solid #f00;
}

.mark-arrow {
    position: absolute;
    left: 424px;
    top: 480px;
    width: 70px;
    height: 66px;
}
</style>
